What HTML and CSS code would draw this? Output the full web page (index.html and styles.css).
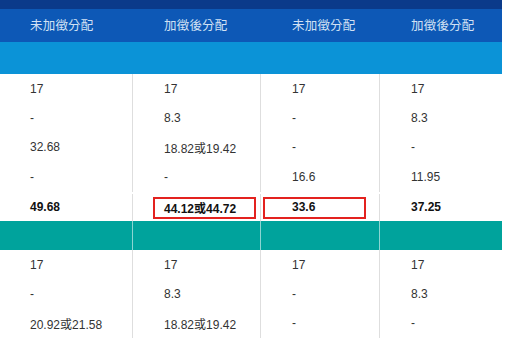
FILE: index.html
```html
<!DOCTYPE html>
<html>
<head>
<meta charset="utf-8">
<link rel="stylesheet" href="styles.css">
</head>
<body>
<div class="table">
  <div class="topband"></div>
  <div class="row head">
    <div class="cell">未加徵分配</div>
    <div class="cell">加徵後分配</div>
    <div class="cell">未加徵分配</div>
    <div class="cell">加徵後分配</div>
  </div>
  <div class="row band-blue">
    <div class="cell"></div><div class="cell"></div><div class="cell"></div><div class="cell"></div>
  </div>
  <div class="row">
    <div class="cell">17</div><div class="cell">17</div><div class="cell">17</div><div class="cell">17</div>
  </div>
  <div class="row">
    <div class="cell">-</div><div class="cell">8.3</div><div class="cell">-</div><div class="cell">8.3</div>
  </div>
  <div class="row">
    <div class="cell">32.68</div><div class="cell">18.82或19.42</div><div class="cell">-</div><div class="cell">-</div>
  </div>
  <div class="row">
    <div class="cell">-</div><div class="cell">-</div><div class="cell">16.6</div><div class="cell">11.95</div>
  </div>
  <div class="row total">
    <div class="cell">49.68</div>
    <div class="cell">44.12或44.72<span class="mark mark-a"></span></div>
    <div class="cell">33.6<span class="mark mark-b"></span></div>
    <div class="cell">37.25</div>
  </div>
  <div class="row band-teal">
    <div class="cell"></div><div class="cell"></div><div class="cell"></div><div class="cell"></div>
  </div>
  <div class="row">
    <div class="cell">17</div><div class="cell">17</div><div class="cell">17</div><div class="cell">17</div>
  </div>
  <div class="row">
    <div class="cell">-</div><div class="cell">8.3</div><div class="cell">-</div><div class="cell">8.3</div>
  </div>
  <div class="row">
    <div class="cell">20.92或21.58</div><div class="cell">18.82或19.42</div><div class="cell">-</div><div class="cell">-</div>
  </div>
</div>
</body>
</html>
```
FILE: styles.css
```css
html, body {
  margin: 0;
  padding: 0;
  background: #ffffff;
}
body {
  font-family: "Liberation Sans", Arial, "Noto Sans CJK TC", sans-serif;
  font-size: 12px;
  color: #333333;
  overflow: hidden;
}
.table {
  width: 502px;
}
.topband {
  height: 9px;
  background: #0b3a8a;
}
.row {
  display: grid;
  grid-template-columns: 132px 128px 119px 123px;
  height: 29.4px;
}
.cell {
  position: relative;
  display: flex;
  align-items: center;
  padding-left: 31px;
  border-left: 1px solid #dedede;
  white-space: nowrap;
}
.cell:first-child {
  border-left: none;
  padding-left: 30px;
}
.head {
  height: 33px;
  background: #0d58b6;
  color: #d2e1f4;
  font-size: 12.5px;
  letter-spacing: 0.2px;
  padding-bottom: 3px;
  box-sizing: border-box;
}
.head .cell,
.band-blue .cell {
  border-left-color: transparent;
}
.band-blue {
  height: 32px;
  background: #0b93d7;
}
.band-teal {
  height: 29px;
  background: #00a39c;
}
.band-teal .cell {
  border-left-color: rgba(255, 255, 255, 0.55);
}
.total {
  font-weight: bold;
  color: #111111;
  padding-top: 2px;
  box-sizing: border-box;
}
.mark {
  position: absolute;
  top: 3px;
  bottom: 2px;
  border: 2px solid #e3221f;
}
.mark-a {
  left: 20px;
  right: 4px;
}
.mark-b {
  left: 2px;
  right: 13px;
}
```
